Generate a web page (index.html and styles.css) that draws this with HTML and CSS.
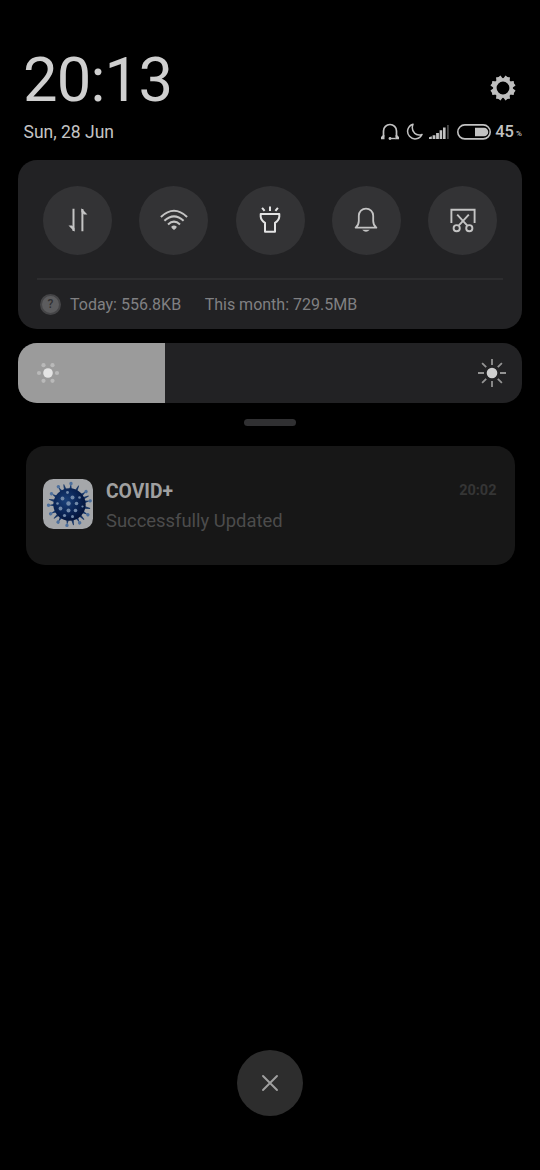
FILE: index.html
```html
<!DOCTYPE html>
<html lang="en">
<head>
<meta charset="utf-8">
<title>Notification shade</title>
<link rel="stylesheet" href="styles.css">
</head>
<body>
<main class="shade">
  <header class="header">
    <div class="clock-row">
      <div class="clock">20:13</div>
      <svg class="gear" width="28" height="28" viewBox="-14 -14 28 28">
        <circle r="8.2" fill="none" stroke="#bebebe" stroke-width="3.6"/>
        <g fill="#bebebe">
          <path id="tooth" d="M-3.4 -8.8-2.5-12.2Q-2.3-12.8-1.7-12.4Q0-11.5 1.7-12.4Q2.3-12.8 2.5-12.2L3.4-8.8Z" transform="rotate(22.5)"/>
          <use href="#tooth" transform="rotate(45)"/><use href="#tooth" transform="rotate(90)"/>
          <use href="#tooth" transform="rotate(135)"/><use href="#tooth" transform="rotate(180)"/>
          <use href="#tooth" transform="rotate(225)"/><use href="#tooth" transform="rotate(270)"/>
          <use href="#tooth" transform="rotate(315)"/>
        </g>
      </svg>
    </div>
    <div class="status-row">
      <div class="date">Sun, 28 Jun</div>
      <div class="status">
        <svg class="headset" width="18" height="18" viewBox="0 0 18 18" fill="none" stroke="#c2c2c2" stroke-width="1.7">
          <path d="M2.5 13.5V8A6.5 6.5 0 0 1 15.5 8V13.5"/>
          <path d="M0 16.3V14L1.8 12.3H3.5V16.3ZM18 16.3V14L16.2 12.3H14.5V16.3Z" fill="#c2c2c2" stroke="none"/>
          <path d="M8.2 15.5H14.8" stroke-width="1.4"/><circle cx="9" cy="15.5" r="1.4" fill="#c2c2c2" stroke="none"/>
        </svg>
        <svg class="moon" width="17" height="18" viewBox="0 0 17 18" fill="none" stroke="#c2c2c2" stroke-width="1.5" stroke-linejoin="round">
          <path d="M7 1.2A7.5 7.5 0 1 0 16 11.4Q11.6 13 8.5 10.1Q5 6.5 7 1.2Z"/>
        </svg>
        <svg class="signal" width="20" height="16" viewBox="0 0 20 16">
          <g fill="#c2c2c2"><path d="M0 13.2 2.8 12.2V15H0zM3.6 11.2h2.8V15H3.6zM7.1 9h2.8V15H7.1zM10.6 6.2h2.6V15h-2.6zM14 3.4h2.6V15H14z"/></g>
          <path d="M18 1h1.8v14H18z" fill="#484848"/>
        </svg>
        <svg class="battery" width="34" height="16" viewBox="0 0 34 16">
          <rect x=".8" y=".9" width="32.4" height="14" rx="7" fill="none" stroke="#c2c2c2" stroke-width="1.6"/>
          <path d="M18 3.7H27A4.2 4.2 0 0 1 27 12.2H18Z" fill="#c2c2c2"/>
        </svg>
        <span class="level">45</span><span class="percent">%</span>
      </div>
    </div>
  </header>

  <section class="panel">
    <div class="toggles">
      <div class="toggle"><svg width="34" height="34" viewBox="-17 -17 34 34">
        <path d="M-4.5-11.2V11M4.4 11.2V-11" fill="none" stroke="#c4c4c4" stroke-width="2"/>
        <path d="M-3.5 11.8V8L-6 5.5H-9.5ZM3.4-11.8V-8L6-5.5H9.4Z" fill="#c4c4c4"/></svg></div>
      <div class="toggle"><svg width="34" height="34" viewBox="-17 -17 34 34" fill="none" stroke="#c4c4c4" stroke-width="2">
        <path d="M-13.1-3Q0-15.4 13.1-3M-9.6 .8Q0-8 9.6 .8M-6 4.4Q0-1.2 6 4.4"/>
        <path d="M-2.8 6.8Q0 4.2 2.8 6.8Q2.7 8.2 0 10.1Q-2.7 8.2-2.8 6.8Z" fill="#c4c4c4" stroke="none"/></svg></div>
      <div class="toggle"><svg width="34" height="34" viewBox="-17 -17 34 34" fill="none" stroke="#e4e4e4" stroke-width="2" stroke-linejoin="round">
        <path d="M-9.3-6.1H9.3V-3.3Q9 .4 5 2.8V11.7H-5V2.8Q-9 .4-9.3-3.3Z"/>
        <path d="M0-13.4V-9M-7.9-12.1-5.4-9.1M7.9-12.1 5.4-9.1"/></svg></div>
      <div class="toggle"><svg width="34" height="34" viewBox="-17 -17 34 34" fill="none" stroke="#c4c4c4" stroke-width="1.8" stroke-linejoin="round">
        <path d="M-10.4 7.6Q-7.2 5.2-7.2 1V-4.2A7.2 7.2 0 0 1 7.2-4.2V1Q7.2 5.2 10.4 7.6Z"/>
        <path d="M-3.8 9.8H3.8Q0 13.5-3.8 9.8Z" fill="#c4c4c4" stroke="none"/></svg></div>
      <div class="toggle"><svg width="34" height="34" viewBox="-17 -17 34 34" fill="none" stroke="#c4c4c4" stroke-width="1.9">
        <path d="M-11.6 3V-10.2H11.6V3M-5.8-5.4 4.1 5.3M5.8-5.4-4.1 5.3"/>
        <circle cx="-6.3" cy="8.2" r="3.1"/><circle cx="6.3" cy="8.2" r="3.1"/></svg></div>
    </div>
    <div class="usage">
      <span class="badge">?</span>
      <span class="today">Today: 556.8KB</span>
      <span>This month: 729.5MB</span>
    </div>
  </section>

  <section class="brightness">
    <div class="fill">
      <svg width="26" height="26" viewBox="-13 -13 26 26">
        <circle r="4.8" fill="#e4e4e4"/>
        <g fill="#b9b9b9"><circle cx="-9" r="2.1"/><circle cx="9" r="2.1"/><circle cx="-4.5" cy="-7.8" r="2.1"/><circle cx="4.5" cy="-7.8" r="2.1"/><circle cx="-4.5" cy="7.8" r="2.1"/><circle cx="4.5" cy="7.8" r="2.1"/></g>
      </svg>
    </div>
    <svg width="30" height="30" viewBox="-15 -15 30 30">
      <circle r="5.3" fill="#cfcfcf"/>
      <path d="M0-14V-8M0 14V8M-14 0H-8M14 0H8M-9.9-9.9-5.8-5.8M9.9-9.9 5.8-5.8M-9.9 9.9-5.8 5.8M9.9 9.9 5.8 5.8" stroke="#939393" stroke-width="1.8"/>
    </svg>
  </section>
  <div class="handle"></div>

  <article class="notification">
    <svg class="app-icon" width="50" height="50" viewBox="-25 -25 50 50">
      <defs>
        <radialGradient id="virus" cx=".38" cy=".38" r=".65"><stop offset="0" stop-color="#1a4079"/><stop offset=".6" stop-color="#0a2455"/><stop offset="1" stop-color="#04143a"/></radialGradient>
        <g id="spike"><path d="M-1.6-14 0-21 1.6-14Z" fill="#16386c"/><circle cy="-21" r="1.7" fill="#4c6f9d"/></g>
        <path id="spike-short" d="M-1.3-15-.4-21H.4L1.3-15Z" fill="#193766"/>
      </defs>
      <rect x="-25" y="-25" width="50" height="50" rx="10.5" fill="#a5a7aa"/>
      <g transform="translate(1.5 .5)">
        <use href="#spike" transform="rotate(4)"/><use href="#spike" transform="rotate(52)"/>
        <use href="#spike" transform="rotate(80)"/><use href="#spike" transform="rotate(119)"/>
        <use href="#spike" transform="rotate(151)"/><use href="#spike" transform="rotate(187)"/>
        <use href="#spike" transform="rotate(213)"/><use href="#spike" transform="rotate(244)"/>
        <use href="#spike" transform="rotate(268)"/><use href="#spike" transform="rotate(301)"/>
        <use href="#spike" transform="rotate(328)"/>
        <use href="#spike-short" transform="rotate(26)"/><use href="#spike-short" transform="rotate(66)"/>
        <use href="#spike-short" transform="rotate(101)"/><use href="#spike-short" transform="rotate(136)"/>
        <use href="#spike-short" transform="rotate(169)"/><use href="#spike-short" transform="rotate(228)"/>
        <use href="#spike-short" transform="rotate(284)"/><use href="#spike-short" transform="rotate(344)"/>
        <circle r="16.2" fill="url(#virus)"/>
        <g fill="#7189a9">
          <circle cx="-1" cy="-1" r="2.2"/><circle cx="3" cy="-7" r="2"/><circle cx="-7" cy="-6" r="1.9"/><circle cx="7" cy="-1" r="1.8"/>
          <circle cx="-9" cy="4" r="1.9"/><circle cx="-1" cy="6" r="2"/><circle cx="6" cy="6" r="1.8"/><circle cx="-5" cy="11" r="1.6"/>
          <circle cx="3" cy="12" r="1.5"/><circle cx="-12" cy="-1" r="1.3"/><circle cx="10" cy="-7" r="1.3"/><circle cx="-2" cy="-12" r="1.4"/>
          <circle cx="13" cy="2" r="1.1"/>
        </g>
      </g>
    </svg>
    <div class="message">
      <div class="title">COVID+</div>
      <div class="body">Successfully Updated</div>
    </div>
    <time class="when">20:02</time>
  </article>

  <div class="close">
    <svg width="20" height="20" viewBox="-10 -10 20 20"><path d="M-7-7 7 7M7-7-7 7" stroke="#a0a0a0" stroke-width="1.9" stroke-linecap="round"/></svg>
  </div>
</main>
</body>
</html>
```
FILE: styles.css
```css
* { box-sizing: border-box; }
body { margin: 0; background: #000; font-family: Roboto, "Liberation Sans", sans-serif; }
svg { display: block; flex: none; }
.shade { width: 540px; height: 1170px; padding: 48px 18px 54.5px; display: flex; flex-direction: column; overflow: hidden; }

.header { height: 112px; flex: none; }
.clock-row { height: 64px; padding: 0 5.5px 0 5px; display: flex; justify-content: space-between; }
.clock { font-size: 61.5px; line-height: 64px; color: #cfcfcf; letter-spacing: -0.8px; }
.gear { margin-top: 26px; }
.status-row { height: 40px; padding-left: 5.5px; display: flex; align-items: center; justify-content: space-between; }
.date { font-size: 17.5px; line-height: 20px; color: #c4c4c4; }
.status { height: 18px; margin-right: -1px; display: flex; align-items: center; color: #c2c2c2; }
.moon { margin-left: 7px; }
.signal { margin-left: 6px; }
.battery { margin-left: 8px; }
.level { margin-left: 4px; font-size: 16.5px; font-weight: 500; line-height: 18px; }
.percent { width: 9px; padding: 4px 0 0 2px; font-size: 8px; font-weight: 500; line-height: 10px; }

.panel { height: 168.5px; flex: none; border-radius: 19px; background: #222224; padding: 25.5px 19px 0; }
.toggles { height: 94px; padding: 0 6px; display: flex; justify-content: space-between; border-bottom: 2px solid #2d2d2f; }
.toggle { width: 69px; height: 69px; border-radius: 50%; background: #333335; display: flex; align-items: center; justify-content: center; }
.usage { height: 49px; padding-left: 3px; display: flex; align-items: center; font-size: 16px; color: #808082; }
.badge { width: 21px; height: 21px; border-radius: 50%; border: 2px solid #454547; background: #5c5c5e; color: #303032; font-size: 12px; font-weight: 500; line-height: 17px; text-align: center; margin-right: 9px; }
.today { margin-right: 23.5px; }

.brightness { height: 60px; flex: none; margin-top: 14px; border-radius: 19px; background: #222224; overflow: hidden; display: flex; justify-content: space-between; align-items: center; padding-right: 15px; }
.fill { width: 147px; height: 60px; padding-left: 17px; display: flex; align-items: center; background: #9b9b9b; }
.handle { width: 52px; height: 7px; flex: none; align-self: center; margin-top: 16.5px; border-radius: 4px; background: #303032; }

.notification { height: 119.5px; flex: none; margin: 19.5px 7.5px 0; padding: 33px 18px 0 17px; border-radius: 19px; background: #171717; display: flex; }
.message { flex: 1; padding-left: 13.5px; }
.title { font-size: 19.3px; line-height: 26px; font-weight: 700; color: #a0a0a0; }
.body { margin-top: 3px; font-size: 18.4px; line-height: 26px; color: #4c4c4c; }
.when { padding-top: 3px; font-size: 14.5px; line-height: 18px; font-weight: 700; color: #353535; }

.close { width: 66px; height: 66px; flex: none; align-self: center; margin-top: auto; border-radius: 50%; background: #2d2d2d; display: flex; align-items: center; justify-content: center; }
```
